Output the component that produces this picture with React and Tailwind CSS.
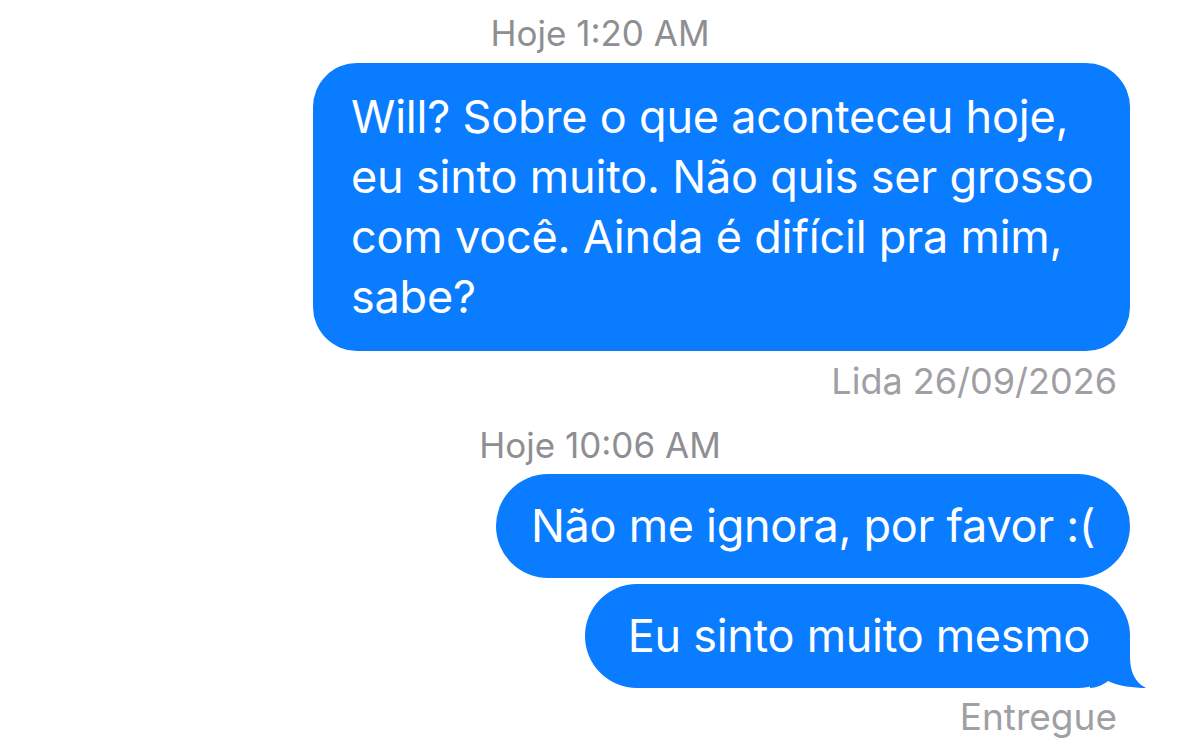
export default function App() {
  return (
    <div
      className="min-h-[745px] w-full bg-white flex flex-col pr-[70px] text-white"
      style={{ fontFamily: "Inter, 'Noto Sans', sans-serif" }}
    >
      {/* first group */}
      <p className="mt-[14px] text-center text-[35px] leading-[38px] text-[#8e8e93] pl-[70px]">
        Hoje 1:20 AM
      </p>
      <div className="mt-[11px] self-end w-[817px] rounded-[44px] bg-[#0a7cff] pl-[38px] pr-[24px] py-[24px] text-[45px] leading-[60px] tracking-[-0.2px] whitespace-nowrap">
        Will? Sobre o que aconteceu hoje,
        <br />
        eu sinto muito. Não quis ser grosso
        <br />
        com você. Ainda é difícil pra mim,
        <br />
        sabe?
      </div>
      <p className="mt-[11px] mr-[13px] text-right text-[36px] leading-[38px] text-[#a0a0a4]">
        Lida 26/09/2026
      </p>

      {/* second group */}
      <p className="mt-[26px] text-center text-[35px] leading-[38px] text-[#8e8e93] pl-[70px]">
        Hoje 10:06 AM
      </p>
      <div className="mt-[10px] self-end rounded-full bg-[#0a7cff] px-[35px] py-[22px] text-[45px] leading-[60px] tracking-[-0.3px]">
        Não me ignora, por favor :(
      </div>
      <div className="relative mt-[6px] self-end rounded-full bg-[#0a7cff] pl-[43px] pr-[40px] py-[22px] text-[45px] leading-[60px] tracking-[-0.3px]">
        Eu sinto muito mesmo
        <svg
          className="absolute right-[-16px] bottom-0"
          width="56"
          height="48"
          viewBox="0 0 56 48"
        >
          <path
            d="M0 0 H40 V17 C40 30 44 42 56 48 C44 48 28 46 18 41 C13 45 6 48 0 48 Z"
            fill="#0a7cff"
          />
        </svg>
      </div>
      <p className="mt-[10px] mr-[13px] text-right text-[37px] leading-[38px] text-[#a0a0a4]">
        Entregue
      </p>
    </div>
  );
}
